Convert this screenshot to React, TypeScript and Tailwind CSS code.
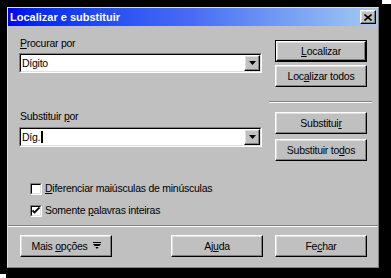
import React from 'react'

// text with one accelerator letter underlined
function Acc({ text, at }: { text: string; at: number }) {
  return (
    <>
      {text.slice(0, at)}
      <span className="underline underline-offset-[1px] decoration-1">{text.charAt(at)}</span>
      {text.slice(at + 1)}
    </>
  )
}

const raised =
  'border border-t-white border-l-white border-b-black border-r-black shadow-[inset_-1px_-1px_0_#808080,inset_1px_1px_0_#dfdfdf] bg-[#c0c0c0]'

function Button({ children, w = 'w-[92px]' }: { children: React.ReactNode; w?: string }) {
  return (
    <div className={`${raised} ${w} h-[22px] flex items-center justify-center text-black`}>
      {children}
    </div>
  )
}

function DefaultButton({ children }: { children: React.ReactNode }) {
  return (
    <div className="w-[92px] h-[22px] border border-black">
      <div className={`${raised} h-full w-full flex items-center justify-center`}>{children}</div>
    </div>
  )
}

function Combo({ children }: { children: React.ReactNode }) {
  return (
    <div className="w-[243px] h-[20px] border border-t-[#808080] border-l-[#808080] border-b-white border-r-white">
      <div className="h-full w-full bg-white border border-t-black border-l-black border-b-[#dfdfdf] border-r-[#dfdfdf] flex items-center">
        <div className="flex-1 flex items-center pl-[1px]">{children}</div>
        <div className={`${raised} w-[16px] h-[16px] flex items-center justify-center`}>
          <svg width="7" height="4" viewBox="0 0 7 4">
            <path d="M0 0h7L3.5 4z" fill="#000" />
          </svg>
        </div>
      </div>
    </div>
  )
}

function Separator({ className = '' }: { className?: string }) {
  return (
    <div className={`h-[2px] border-t border-t-[#808080] border-b border-b-white ${className}`} />
  )
}

function Checkbox({ checked, children }: { checked?: boolean; children: React.ReactNode }) {
  return (
    <div className="flex items-center gap-[3px] h-[13px]">
      <div className="w-[12px] h-[12px] border border-t-[#808080] border-l-[#808080] border-b-white border-r-white">
        <div className="w-full h-full bg-white border border-t-black border-l-black border-b-[#dfdfdf] border-r-[#dfdfdf] flex items-center justify-center">
          {checked && (
            <svg width="8" height="7" viewBox="0 0 8 7">
              <path d="M0.5 3.5l2 2 5-5" stroke="#000" strokeWidth="1.8" fill="none" />
            </svg>
          )}
        </div>
      </div>
      <span>{children}</span>
    </div>
  )
}

export default function App() {
  return (
    <div className="relative w-[391px] h-[278px] bg-black pt-[7px] pl-[7px] font-['Liberation_Sans',Arial,sans-serif] text-[10.5px] tracking-[-0.25px] leading-[13px] text-black">
      <div className="absolute right-0 top-0 w-[9px] h-[4px] bg-white" />
      <div className="absolute left-0 bottom-0 w-[6px] h-[4px] bg-white" />

      <div className="w-[372px] h-[261px] bg-[#c0c0c0] border border-t-[#dfdfdf] border-l-[#dfdfdf] border-b-[#808080] border-r-[#808080] flex flex-col">
        {/* barra de título */}
        <div className="h-[18px] flex items-center justify-between pl-[2px] pr-[2px] bg-linear-to-r from-[#0000f0] via-[#4a6cf4] to-[#a6caf0]">
          <span className="text-white font-bold text-[11px] tracking-normal">Localizar e substituir</span>
          <div className={`${raised} w-[16px] h-[14px] flex items-center justify-center`}>
            <svg width="8" height="7" viewBox="0 0 8 7">
              <path d="M0.5 0.5l7 6M7.5 0.5l-7 6" stroke="#000" strokeWidth="1.6" />
            </svg>
          </div>
        </div>

        <div className="flex flex-row items-start pl-[11px] pr-[11px] gap-[13px]">
          {/* coluna esquerda */}
          <div className="w-[243px] flex flex-col">
            <span className="mt-[11px] pl-[1px]">
              <Acc text="Procurar por" at={0} />
            </span>
            <div className="mt-[3px]">
              <Combo>
                <span>Dígito</span>
              </Combo>
            </div>
            <span className="mt-[37px] pl-[1px]">
              <Acc text="Substituir por" at={11} />
            </span>
            <div className="mt-[4px]">
              <Combo>
                <span>Díg.</span>
                <span className="w-[2px] h-[12px] bg-black ml-[1px]" />
              </Combo>
            </div>
            <div className="mt-[35px] ml-[11px] flex flex-col gap-[9px]">
              <Checkbox>
                <Acc text="Diferenciar maiúsculas de minúsculas" at={0} />
              </Checkbox>
              <Checkbox checked>
                <Acc text="Somente palavras inteiras" at={8} />
              </Checkbox>
            </div>
          </div>

          {/* coluna direita */}
          <div className="w-[92px] flex flex-col">
            <div className="mt-[14px]">
              <DefaultButton>
                <Acc text="Localizar" at={0} />
              </DefaultButton>
            </div>
            <div className="mt-[3px]">
              <Button>
                <Acc text="Localizar todos" at={3} />
              </Button>
            </div>
            <Separator className="mt-[14px] -ml-[6px] -mr-[5px]" />
            <div className="mt-[9px]">
              <Button>
                <Acc text="Substituir" at={9} />
              </Button>
            </div>
            <div className="mt-[5px]">
              <Button>
                <Acc text="Substituir todos" at={13} />
              </Button>
            </div>
          </div>
        </div>

        <Separator className="mt-[8px]" />

        <div className="mt-[8px] flex flex-row pl-[12px] pr-[11px]">
          <Button>
            <span className="flex items-center gap-[5px]">
              <span>
                <Acc text="Mais opções" at={5} />
              </span>
              <svg width="8" height="8" viewBox="0 0 8 8">
                <path d="M0 0h8v1H0z" fill="#000" />
                <path d="M0 2h8L4 7z" fill="#000" />
                <path d="M1 4h6v1H1z" fill="#c0c0c0" />
              </svg>
            </span>
          </Button>
          <div className="ml-auto">
            <Button>
              <Acc text="Ajuda" at={2} />
            </Button>
          </div>
          <div className="ml-[12px]">
            <Button>
              <Acc text="Fechar" at={2} />
            </Button>
          </div>
        </div>
      </div>
    </div>
  )
}
